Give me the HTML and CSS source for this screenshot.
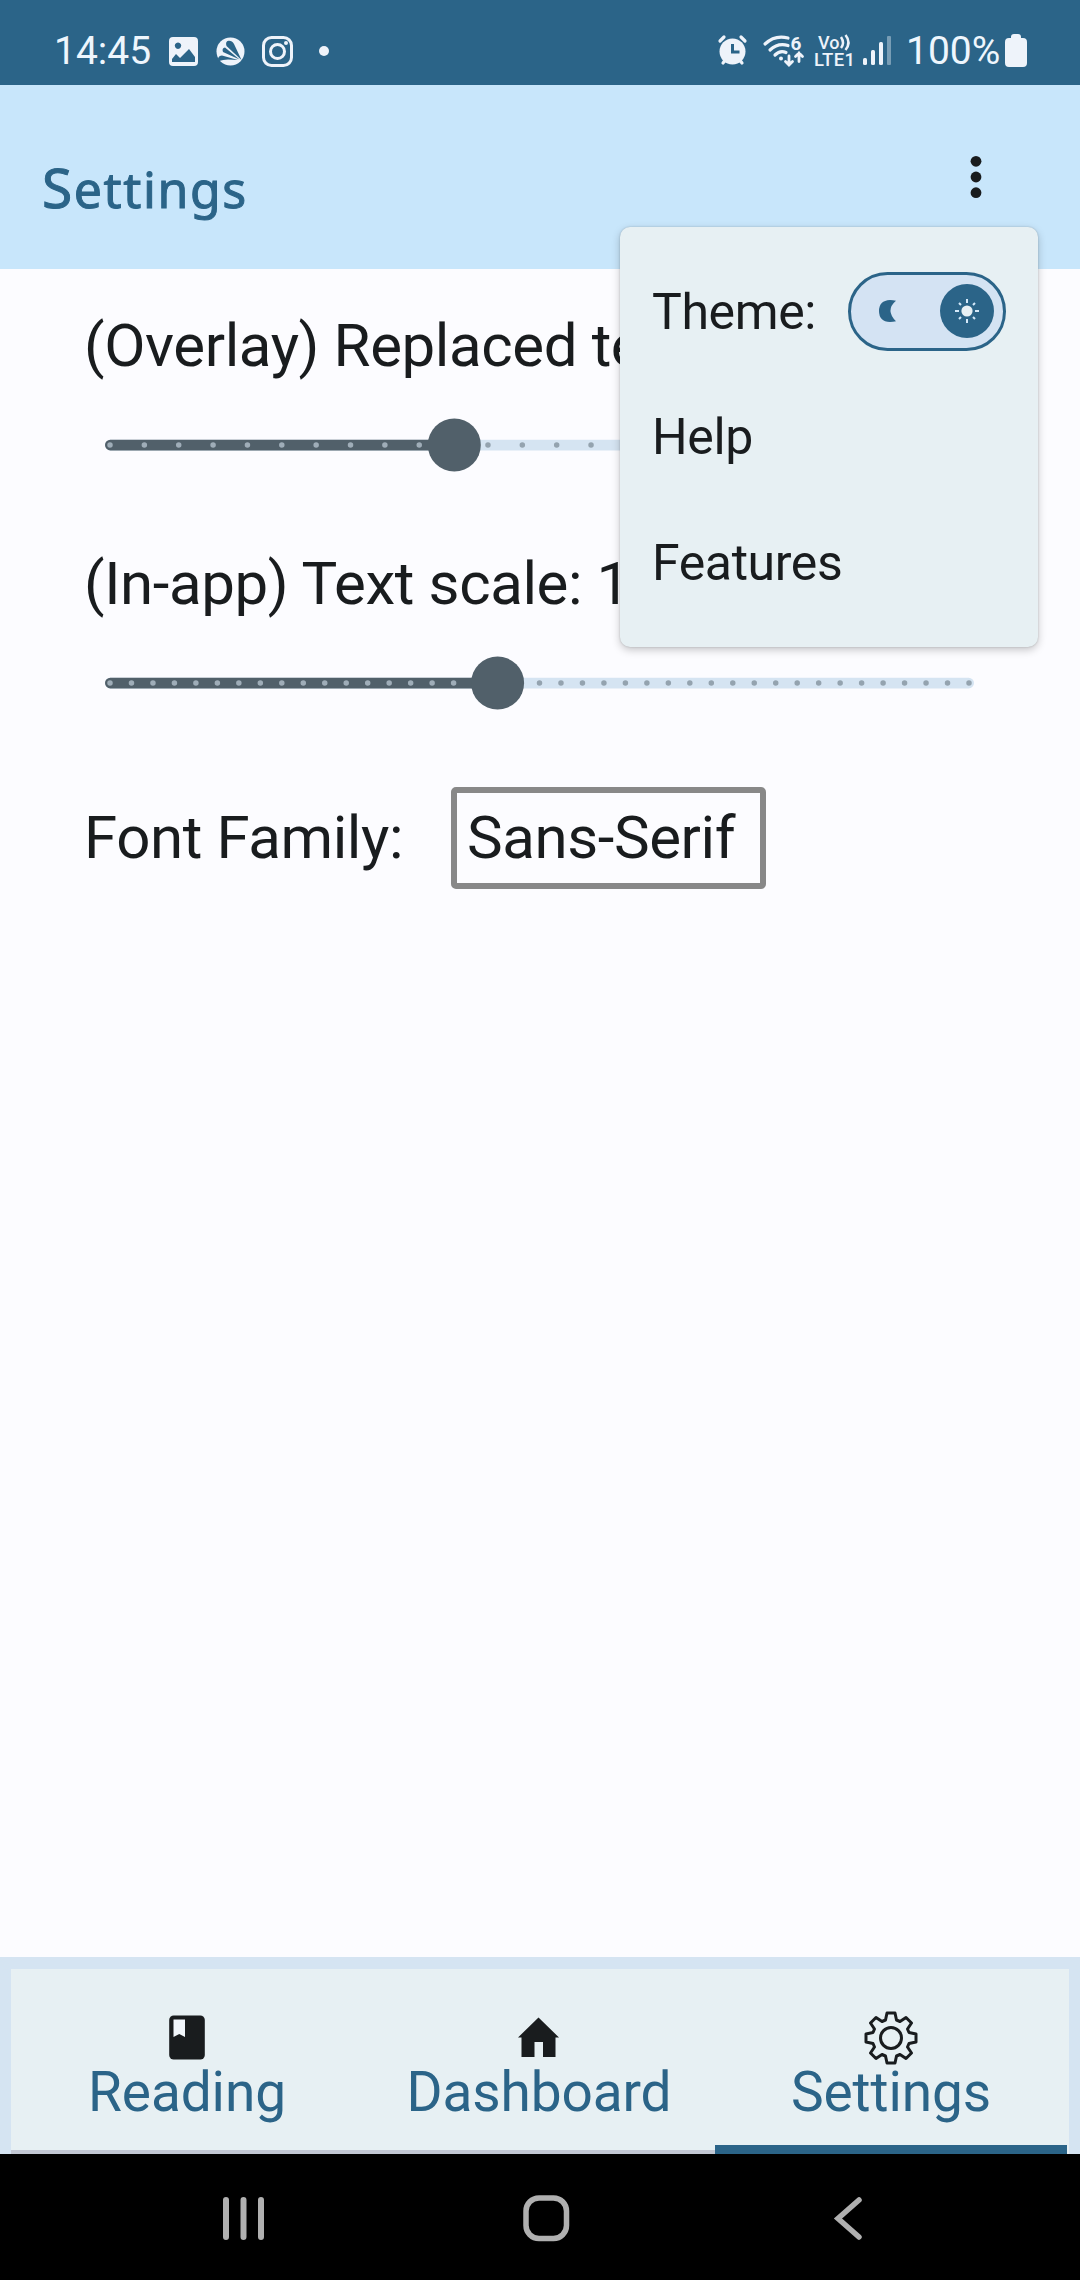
FILE: index.html
```html
<!DOCTYPE html>
<html lang="en">
<head>
<meta charset="utf-8">
<title>Settings</title>
<link rel="stylesheet" href="styles.css">
</head>
<body>
<div class="screen">
  <div class="status">
    <span class="status-text clock">14:45</span>
    <svg class="status-left" width="172" height="42" viewBox="0 0 172 42">
      <path fill="#eef3fa" fill-rule="evenodd" d="M12 7h21q4 0 4 4v21q0 4-4 4H12q-4 0-4-4V11q0-4 4-4zM17 12.500a3.200 3.200 0 1 0 .01 0zM11 32h23V27l-6-8-9 9-4-4-4 5z"/>
      <circle cx="69.500" cy="21.500" r="14" fill="#eef3fa"/>
      <path fill="#2b6488" d="M80.500 30L65.500 16Q64 11.500 67.500 10.800Q71 10.500 73 14ZM78.500 29.500L62 22Q60.500 18 64 17.500ZM77 30L67 29.500Q62 29.500 58 31L57 28.500Q58 25.500 61 25.500Z"/>
      <g fill="none" stroke="#eef3fa" stroke-width="3"><rect x="102.500" y="7.500" width="28" height="28" rx="8"/><circle cx="116.500" cy="21.500" r="7"/></g>
      <circle cx="125" cy="13" r="2" fill="#eef3fa"/>
      <circle cx="163" cy="21" r="5" fill="#eef3fa"/>
    </svg>
    <svg class="status-right" width="180" height="42" viewBox="0 0 180 42">
      <circle cx="21.500" cy="21.500" r="13" fill="#eef3fa"/>
      <g fill="none" stroke="#eef3fa" stroke-width="3.200" stroke-linecap="round">
        <path d="M9 11l4-4M34 11l-4-4M12 33l3-4M31 33l-3-4"/>
        <path d="M54 14Q64 4.500 77 8M59 20Q67 12.500 77 15.500M64 25Q69 20 75 22.500"/>
        <path stroke-width="2.800" d="M78 26v8.500M74.500 31.500l3.500 3.500 3.500-3.500M88 31.500V23M84.500 26.500l3.500-3.500 3.500 3.500"/>
      </g>
      <path d="M21.500 14v8h7" fill="none" stroke="#2b6488" stroke-width="3"/>
      <circle cx="70" cy="28.500" r="2" fill="#eef3fa"/>
      <g fill="#eef3fa" font-family="Roboto, sans-serif" font-weight="700">
        <text x="79.500" y="19.500" font-size="19">6</text>
        <text x="107" y="18.500" font-size="18" font-weight="500">Vo</text>
        <text x="103" y="36" font-size="18.500" textLength="41" font-weight="500">LTE1</text>
      </g>
      <path d="M130 7q4 6 0 11M134.500 5q6 7.500 0 15" fill="none" stroke="#eef3fa" stroke-width="2.500"/>
      <g fill="#eef3fa"><rect x="152" y="28" width="4" height="7" rx="1.500"/><rect x="160" y="20" width="4" height="15" rx="1.500"/><rect x="168" y="12" width="4" height="23" rx="1.500"/><rect x="176" y="6" width="4" height="29" rx="1" opacity=".4"/></g>
    </svg>
    <span class="status-text percent">100%</span>
    <svg class="battery" width="22" height="34" viewBox="0 0 22 34"><path fill="#eef3fa" d="M6 3q0-3 3-3h4q3 0 3 3v1h2q4 0 4 4v21q0 4-4 4H4q-4 0-4-4V8q0-4 4-4h2z"/></svg>
  </div>

  <header class="appbar">
    <h1 class="title">Settings</h1>
    <svg class="more" width="12" height="44" viewBox="0 0 12 44"><g fill="#191c1e"><circle cx="6" cy="6.300" r="5.400"/><circle cx="6" cy="22" r="5.400"/><circle cx="6" cy="37.700" r="5.400"/></g></svg>
    <div class="menu">
      <div class="menu-item theme">
        <span>Theme:</span>
        <div class="toggle">
          <svg width="17" height="22" viewBox="0 0 17 22"><path fill="#2b6488" d="M17 .7Q6 10 17 21.300Q14 22 11 22Q0 21.500 0 11T11 0Q14 0 17 .7z"/></svg>
          <div class="knob">
            <svg width="26" height="26" viewBox="-13 -13 26 26"><circle r="5.600" fill="#e8f0f4"/><path d="M0-12v4M0 12v-4M-12 0h4M12 0h-4M-8-8l2 2M8 8l-2-2M-8 8l2-2M8-8l-2 2" stroke="#d4e9fa" stroke-width="2"/></svg>
          </div>
        </div>
      </div>
      <div class="menu-item">Help</div>
      <div class="menu-item">Features</div>
    </div>
  </header>

  <main class="content">
    <div class="label">(Overlay) Replaced te</div>
    <svg class="slider" width="870" height="60" viewBox="105 0 870 60">
      <rect x="105" y="24.700" width="869" height="10.700" rx="5.300" fill="#d5e4f2"/>
      <rect x="105" y="24.700" width="350" height="10.700" rx="5.300" fill="#51606a"/>
      <path class="ticks" d="M110 30H455" stroke="#9fadb8" stroke-dasharray="0 34.360"/>
      <path class="ticks" d="M487.960 30H970" stroke="#94a3af" stroke-dasharray="0 34.360"/>
      <circle cx="454.300" cy="30" r="26.500" fill="#51606a"/>
    </svg>
    <div class="label second">(In-app) Text scale: 1</div>
    <svg class="slider" width="870" height="60" viewBox="105 0 870 60">
      <rect x="105" y="24.700" width="869" height="10.700" rx="5.300" fill="#d5e4f2"/>
      <rect x="105" y="24.700" width="390" height="10.700" rx="5.300" fill="#51606a"/>
      <path class="ticks" d="M110 30H480" stroke="#9fadb8" stroke-dasharray="0 21.475"/>
      <path class="ticks" d="M539.500 30H970" stroke="#94a3af" stroke-dasharray="0 21.475"/>
      <circle cx="497.600" cy="30" r="26.500" fill="#51606a"/>
    </svg>
    <div class="family">
      <span>Font Family:</span>
      <div class="select">Sans-Serif</div>
    </div>
  </main>

  <nav class="tabs">
    <div class="tab">
      <svg width="54" height="54" viewBox="0 0 54 54"><rect x="9.200" y="4.500" width="35.600" height="44" rx="4.500" fill="#191c1e"/><path d="M13.500 8.500h11.500v17.500l-5.750-3-5.750 3z" fill="#f1f6fb"/></svg>
      <span>Reading</span>
    </div>
    <div class="tab">
      <svg width="54" height="54" viewBox="0 0 54 54"><path fill="#191c1e" d="M26.500 6.500L47 26.500H43.500V46H31V31H22.500V46H9.500V26.500H6z"/></svg>
      <span>Dashboard</span>
    </div>
    <div class="tab active">
      <svg width="54" height="54" viewBox="-27 -27 54 54"><g fill="none" stroke="#191c1e" stroke-width="3" stroke-linejoin="round"><circle r="10.500"/><path d="M-4-25H4L5.500-18L9-16.500L15-20.500L20.500-15L16.500-9L18-5.500L25-4V4L18 5.500L16.500 9L20.500 15L15 20.500L9 16.500L5.500 18L4 25H-4L-5.500 18L-9 16.500L-15 20.500L-20.500 15L-16.500 9L-18 5.500L-25 4V-4L-18-5.500L-16.500-9L-20.500-15L-15-20.500L-9-16.500L-5.500-18Z"/></g></svg>
      <span>Settings</span>
    </div>
  </nav>

  <div class="sysnav">
    <svg width="60" height="60" viewBox="0 0 60 60"><path d="M13 12v37M30.500 12v37M48 12v37" stroke="#b0b0b0" stroke-width="6" stroke-linecap="round"/></svg>
    <svg width="60" height="60" viewBox="0 0 60 60"><rect x="10" y="10" width="40.500" height="40.500" rx="13" fill="none" stroke="#b0b0b0" stroke-width="5.500"/></svg>
    <svg width="60" height="60" viewBox="0 0 60 60"><path d="M41 12L20 30.500L41 49" fill="none" stroke="#b0b0b0" stroke-width="5.500" stroke-linecap="round"/></svg>
  </div>
</div>
</body>
</html>
```
FILE: styles.css
```css
* { box-sizing: border-box; }

body {
  margin: 0;
  font-family: Roboto, sans-serif;
  color: #191c1e;
}

svg { display: block; flex: none; }

.screen {
  width: 1080px;
  height: 2280px;
  display: flex;
  flex-direction: column;
  background: #fcfcff;
  overflow: hidden;
}

.status {
  height: 85px;
  flex: none;
  display: flex;
  align-items: flex-start;
  padding: 30px 53px 0 54px;
  background: #2b6488;
  color: #eef6fd;
}

.status-text { font-size: 39px; line-height: 42px; white-space: nowrap; }
.clock { width: 107px; }
.status-right { margin-left: 378px; }
.percent { margin-left: 15px; width: 99px; }
.battery { margin-top: 4px; }

.appbar {
  position: relative;
  height: 184px;
  flex: none;
  display: flex;
  justify-content: space-between;
  padding: 0 98px 0 42px;
  background: #c8e6fb;
}

.title {
  margin: 65px 0 0;
  font: 400 50px/74px "Noto Sans", sans-serif;
  letter-spacing: 1.6px;
  color: #2b6488;
  -webkit-text-stroke: 1px #2b6488;
}

.title::first-letter { font-size: 55px; }

.more { margin-top: 70px; }

.menu {
  position: absolute;
  left: 620px;
  top: 142px;
  z-index: 2;
  width: 418px;
  height: 420px;
  padding: 21px 32px;
  border-radius: 10px;
  background: #e7f0f3;
  box-shadow: 0 3px 8px rgba(0, 0, 0, 0.22), 0 0 2px rgba(0, 0, 0, 0.2);
}

.menu-item {
  height: 126px;
  display: flex;
  align-items: center;
  font-size: 50px;
  letter-spacing: -0.4px;
}

.theme { justify-content: space-between; }
.theme span { padding-top: 1px; }

.toggle {
  width: 158px;
  height: 79px;
  display: flex;
  align-items: center;
  justify-content: space-between;
  padding: 0 9px 0 28px;
  border: 3px solid #2b6488;
  border-radius: 40px;
  background: #d4e3f3;
}

.knob {
  width: 54px;
  height: 54px;
  display: flex;
  align-items: center;
  justify-content: center;
  border-radius: 50%;
  background: #2b6488;
}

.content {
  height: 1688px;
  flex: none;
  padding: 42px 84px 0;
}

.label { font-size: 60px; line-height: 70px; letter-spacing: -0.4px; white-space: nowrap; }
.second { margin-top: 74px; }
.slider { margin: 34px 0 0 21px; }
.ticks { stroke-width: 5.5px; stroke-linecap: round; }

.family {
  display: flex;
  align-items: center;
  margin-top: 74px;
  font-size: 60px;
  line-height: 70px;
  letter-spacing: -0.4px;
}

.family span { width: 367px; }

.select {
  width: 315px;
  height: 102px;
  padding: 10px;
  border: 6px solid #888;
  border-radius: 5px;
}

.tabs {
  height: 197px;
  flex: none;
  display: grid;
  grid-template-columns: repeat(3, 352px);
  padding: 0 11px;
  border-top: 12px solid #d5e4f2;
  background: linear-gradient(90deg, #d5e4f2 11px, #e7f0f3 11px 1069px, #d5e4f2 1069px);
}

.tab {
  display: flex;
  flex-direction: column;
  align-items: center;
  padding-top: 42px;
  border-bottom: 4px solid #c2c7d3;
  font-size: 55px;
  line-height: 54px;
  letter-spacing: -0.1px;
  color: #2b6488;
}

.active { border-bottom: 9px solid #2b6488; }

.sysnav {
  flex: 1;
  display: flex;
  align-items: center;
  justify-content: space-between;
  padding: 2px 202px 0 213px;
  background: #000;
}
```
